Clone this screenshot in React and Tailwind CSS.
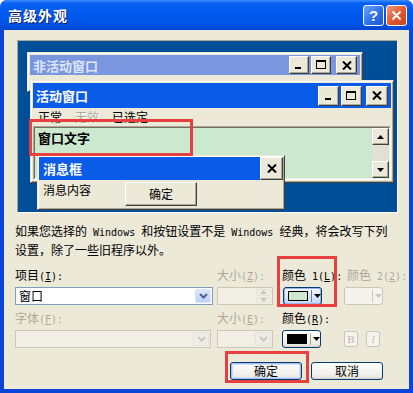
import React from 'react';

const CJK = "font-['Noto_Sans_CJK_SC','Noto_Sans',sans-serif]";

function L({ children }) {
  return <span className="font-['DejaVu_Sans_Mono',monospace] text-[10px]">{children}</span>;
}

function Glyph({ kind }) {
  if (kind === 'min')
    return (
      <svg width="10" height="10" viewBox="0 0 10 10">
        <rect x="1" y="7" width="6" height="2" fill="#000" />
      </svg>
    );
  if (kind === 'max')
    return (
      <svg width="11" height="10" viewBox="0 0 11 10">
        <rect x="0.5" y="0.5" width="9" height="8" fill="none" stroke="#000" />
        <rect x="0" y="0" width="10" height="2" fill="#000" />
      </svg>
    );
  return (
    <svg width="10" height="9" viewBox="0 0 10 9">
      <path d="M1 0.5 L9 8.5 M9 0.5 L1 8.5" stroke="#000" strokeWidth="2" />
    </svg>
  );
}

function CapBtn({ kind, className }) {
  return (
    <div className={`flex items-center justify-center bg-[#ECE9D8] border border-t-white border-l-white border-r-[#404040] border-b-[#404040] shadow-[inset_-1px_-1px_0_#ACA899] ${className}`}>
      <Glyph kind={kind} />
    </div>
  );
}

function Chevron({ color }) {
  return (
    <svg width="9" height="6" viewBox="0 0 9 6">
      <path d="M1 1 L4.5 4.5 L8 1" fill="none" stroke={color} strokeWidth="2" />
    </svg>
  );
}

function Combo({ text, disabled, className }) {
  return (
    <div className={`h-[18px] flex items-stretch border p-[1px] ${disabled ? 'border-[#C9C7BA] bg-[#F0EEE5]' : 'border-[#7F9DB9] bg-white'} ${className}`}>
      <span className="flex-1 pl-[2px] text-[12px] leading-[14px] text-black">{text}</span>
      <div className={`w-[16px] flex items-center justify-center rounded-[2px] border ${disabled ? 'border-[#E4E2D8] bg-[#EEEDE6]' : 'border-[#D8E3FD] bg-[linear-gradient(180deg,#DCE7FE_0%,#BDD0FB_100%)]'}`}>
        <Chevron color={disabled ? '#C9C7BA' : '#4D6185'} />
      </div>
    </div>
  );
}

function Arrow({ up, color = '#000' }) {
  return (
    <svg width="7" height="4" viewBox="0 0 7 4">
      <path d={up ? 'M0 4 L3.5 0 L7 4 Z' : 'M0 0 L3.5 4 L7 0 Z'} fill={color} />
    </svg>
  );
}

function ScrollBtn({ up }) {
  return (
    <div className="h-[17px] flex items-center justify-center bg-[#ECE9D8] border border-t-white border-l-white border-r-[#404040] border-b-[#404040] shadow-[inset_-1px_-1px_0_#ACA899]">
      <Arrow up={up} />
    </div>
  );
}

function Label({ children, grey, className = '' }) {
  return (
    <div className={`h-[13px] leading-[13px] text-[12px] whitespace-nowrap ${grey ? 'text-[#ACA899]' : 'text-black'} ${className}`}>
      {children}
    </div>
  );
}

export default function App() {
  return (
    <div className={`relative w-[413px] h-[393px] overflow-hidden flex flex-col bg-[#0A44D8] rounded-t-[7px] ${CJK}`}>
      {/* title bar */}
      <div className="h-[30px] shrink-0 flex items-center pl-[8px] pr-[6px] rounded-t-[7px] bg-[linear-gradient(180deg,#3D8FFF_0%,#0A62F2_10%,#0058EE_45%,#0054E6_80%,#0046D2_100%)]">
        <span className="text-white font-bold text-[14px] leading-none tracking-[1px] [text-shadow:1px_1px_0_#0A1E6A]">高级外观</span>
        <div className="ml-auto flex gap-[2px]">
          <div className="w-[21px] h-[21px] rounded-[3px] border border-white bg-[linear-gradient(135deg,#6AA6FF_0%,#2A6BE8_60%,#1D58D8_100%)] flex items-center justify-center text-white font-bold text-[15px] leading-none font-['Liberation_Sans',sans-serif]">?</div>
          <div className="w-[21px] h-[21px] rounded-[3px] border border-white bg-[linear-gradient(135deg,#F29A7C_0%,#E0562E_55%,#C8401B_100%)] flex items-center justify-center">
            <svg width="11" height="11" viewBox="0 0 11 11">
              <path d="M1.5 1.5 L9.5 9.5 M9.5 1.5 L1.5 9.5" stroke="#fff" strokeWidth="2" />
            </svg>
          </div>
        </div>
      </div>

      {/* body */}
      <div className="flex-1 mx-[4px] mb-[4px] bg-[#ECE9D8] flex flex-col overflow-hidden">
        {/* preview desktop */}
        <div className="mt-[10px] ml-[13px] w-[381px] h-[173px] shrink-0 relative border border-t-[#ACA899] border-l-[#ACA899] border-r-white border-b-white bg-[#004E98]">
          {/* inactive window */}
          <div className="absolute left-[9px] top-[11px] w-[336px] h-[40px] bg-[#ECE9D8] border border-t-[#ECE9D8] border-l-[#ECE9D8] border-r-[#404040] border-b-[#404040] shadow-[inset_1px_1px_0_white,inset_-1px_-1px_0_#ACA899] p-[2px]">
            <div className="h-[20px] bg-[#7A96DF] flex items-center pl-[3px] pr-[3px]">
              <span className="text-[#DCE5F8] font-bold text-[13px] leading-none">非活动窗口</span>
              <div className="ml-auto flex items-center">
                <CapBtn kind="min" className="w-[20px] h-[18px]" />
                <CapBtn kind="max" className="w-[20px] h-[18px] ml-[2px]" />
                <CapBtn kind="close" className="w-[21px] h-[18px] ml-[5px]" />
              </div>
            </div>
          </div>

          {/* active window */}
          <div className="absolute left-[12px] top-[39px] w-[364px] h-[103px] bg-[#ECE9D8] border border-t-[#ECE9D8] border-l-[#ECE9D8] border-r-[#404040] border-b-[#404040] shadow-[inset_1px_1px_0_white,inset_-1px_-1px_0_#ACA899] p-[2px] flex flex-col">
            <div className="h-[25px] shrink-0 bg-[#0A5CE8] flex items-center pl-[3px] pr-[3px]">
              <span className="text-white font-bold text-[13px] leading-none">活动窗口</span>
              <div className="ml-auto flex items-center">
                <CapBtn kind="min" className="w-[21px] h-[20px]" />
                <CapBtn kind="max" className="w-[21px] h-[20px] ml-[2px]" />
                <CapBtn kind="close" className="w-[22px] h-[20px] ml-[4px]" />
              </div>
            </div>
            <div className="h-[18px] shrink-0 flex items-center pl-[5px] gap-[13px] text-[12px] leading-none">
              <span className="text-black">正常</span>
              <span className="text-[#ACA899] [text-shadow:1px_1px_0_white]">无效</span>
              <span className="text-black">已选定</span>
            </div>
            <div className="flex-1 border border-t-[#ACA899] border-l-[#ACA899] border-r-white border-b-white">
              <div className="h-full flex border border-t-[#716F64] border-l-[#716F64] border-r-[#F1EFE2] border-b-[#F1EFE2] bg-[#CCE8CF]">
                <div className="flex-1 pl-[3px] pt-[2px] text-[13px] font-bold leading-[16px] text-black">窗口文字</div>
                <div className="w-[17px] flex flex-col bg-[#E2DFD4]">
                  <ScrollBtn up />
                  <div className="flex-1" />
                  <ScrollBtn />
                </div>
              </div>
            </div>
          </div>

          {/* message box */}
          <div className="absolute left-[19px] top-[114px] w-[248px] h-[55px] bg-[#ECE9D8] border border-t-[#ECE9D8] border-l-[#ECE9D8] border-r-[#404040] border-b-[#404040] shadow-[inset_1px_1px_0_white,inset_-1px_-1px_0_#ACA899] p-[1px] flex flex-col">
            <div className="h-[23px] shrink-0 bg-[#0A5CE8] flex items-center pl-[4px]">
              <span className="text-white font-bold text-[13px] leading-none">消息框</span>
              <CapBtn kind="close" className="ml-auto w-[23px] h-[23px]" />
            </div>
            <div className="flex-1 flex items-start pl-[4px] pt-[1px]">
              <span className="text-[12px] leading-[18px] text-black">消息内容</span>
              <div className="ml-[34px] mt-[1px] w-[72px] h-[24px] flex items-center justify-center text-[12px] text-black bg-[#ECE9D8] border border-t-white border-l-white border-r-[#404040] border-b-[#404040] shadow-[inset_-1px_-1px_0_#ACA899]">确定</div>
            </div>
          </div>
        </div>

        {/* description */}
        <div className="mt-[9px] ml-[11px] text-[12px] leading-[17px] whitespace-nowrap text-black">
          如果您选择的<L> Windows </L>和按钮设置不是<L> Windows </L>经典，将会改写下列
          <br />
          设置，除了一些旧程序以外。
        </div>

        {/* item grid */}
        <div className="mt-[10px] ml-[11px] grid grid-cols-[202px_65px_62px_60px] gap-y-[6px]">
          <div className="flex flex-col gap-[6px]">
            <Label>项目<L>(<span className="underline">I</span>):</L></Label>
            <Combo text="窗口" className="w-[198px]" />
          </div>
          <div className="flex flex-col gap-[6px]">
            <Label grey>大小<L>(<span className="underline">Z</span>):</L></Label>
            <div className="w-[56px] h-[18px] flex border border-[#C9C7BA] bg-[#F0EEE5] p-[1px]">
              <div className="flex-1" />
              <div className="w-[15px] flex flex-col gap-[1px]">
                <div className="flex-1 flex items-center justify-center rounded-[2px] bg-[#EEEDE6] border border-[#E4E2D8]"><Arrow up color="#C9C7BA" /></div>
                <div className="flex-1 flex items-center justify-center rounded-[2px] bg-[#EEEDE6] border border-[#E4E2D8]"><Arrow color="#C9C7BA" /></div>
              </div>
            </div>
          </div>
          <div className="flex flex-col gap-[6px]">
            <Label>颜色<L> 1(<span className="underline">L</span>):</L></Label>
            <div className="ml-[1px] w-[39px] h-[18px] rounded-[3px] border border-[#003C74] bg-[linear-gradient(180deg,#F4F7FE_0%,#C6D7FA_100%)] shadow-[inset_0_0_0_1px_#98B4F0] flex items-center pl-[4px]">
              <div className="w-[21px] h-[10px] border border-black bg-[#CCE8CF]" />
              <div className="ml-[3px] w-px h-[12px] bg-[#6E7C96]" />
              <div className="ml-[2px]"><Arrow color="#000" /></div>
            </div>
          </div>
          <div className="flex flex-col gap-[6px]">
            <Label grey className="ml-[3px]">颜色<L> 2(<span className="underline">2</span>):</L></Label>
            <div className="w-[39px] h-[18px] rounded-[3px] border border-[#C9C7BA] bg-[#F4F3EE] flex items-center pl-[4px]">
              <div className="w-[21px] h-[10px]" />
              <div className="ml-[3px] w-px h-[12px] bg-[#C9C7BA]" />
              <div className="ml-[2px]"><Arrow color="#C9C7BA" /></div>
            </div>
          </div>

          <div className="flex flex-col gap-[6px]">
            <Label grey>字体<L>(<span className="underline">F</span>):</L></Label>
            <Combo disabled text="" className="w-[196px]" />
          </div>
          <div className="flex flex-col gap-[6px]">
            <Label grey>大小<L>(<span className="underline">E</span>):</L></Label>
            <Combo disabled text="" className="w-[56px]" />
          </div>
          <div className="flex flex-col gap-[6px]">
            <Label>颜色<L>(<span className="underline">R</span>):</L></Label>
            <div className="w-[39px] h-[18px] rounded-[3px] border border-[#003C74] bg-[linear-gradient(180deg,#FFFFFF_0%,#ECEBE6_80%,#D8D4CA_100%)] flex items-center pl-[4px]">
              <div className="w-[21px] h-[10px] border border-black bg-black" />
              <div className="ml-[3px] w-px h-[12px] bg-[#ACA899]" />
              <div className="ml-[2px]"><Arrow color="#000" /></div>
            </div>
          </div>
          <div className="flex flex-col gap-[6px]">
            <div className="h-[13px]" />
            <div className="h-[18px] flex items-center gap-[8px]">
              <div className="w-[14px] h-[16px] rounded-[2px] border border-[#C9C7BA] bg-[#F4F3EE] flex items-center justify-center text-[11px] font-bold leading-none text-[#C9C7BA] font-['Liberation_Serif',serif]">B</div>
              <div className="w-[14px] h-[16px] rounded-[2px] border border-[#C9C7BA] bg-[#F4F3EE] flex items-center justify-center text-[11px] italic leading-none text-[#C9C7BA] font-['Liberation_Serif',serif]">I</div>
            </div>
          </div>
        </div>

        {/* dialog buttons */}
        <div className="mt-[14px] flex justify-end pr-[26px] gap-[9px]">
          <div className="w-[72px] h-[18px] rounded-[3px] border border-[#003C74] bg-[linear-gradient(180deg,#FFFFFF_0%,#ECEBE6_85%,#D6D0C5_100%)] shadow-[inset_0_0_0_1px_#A9C0F0,inset_0_0_0_2px_#D2DEF9] flex items-center justify-center text-[12px] leading-none text-black">确定</div>
          <div className="w-[72px] h-[18px] rounded-[3px] border border-[#003C74] bg-[linear-gradient(180deg,#FFFFFF_0%,#ECEBE6_85%,#D6D0C5_100%)] flex items-center justify-center text-[12px] leading-none text-black">取消</div>
        </div>
      </div>

      {/* red highlight marks */}
      <div className="absolute left-[29px] top-[119px] w-[164px] h-[37px] border-[3px] border-[#E8403F]" />
      <div className="absolute left-[277px] top-[256px] w-[60px] h-[51px] border-[3px] border-[#E8403F]" />
      <div className="absolute left-[225px] top-[351px] w-[84px] h-[32px] border-[3px] border-[#E8403F]" />
    </div>
  );
}
